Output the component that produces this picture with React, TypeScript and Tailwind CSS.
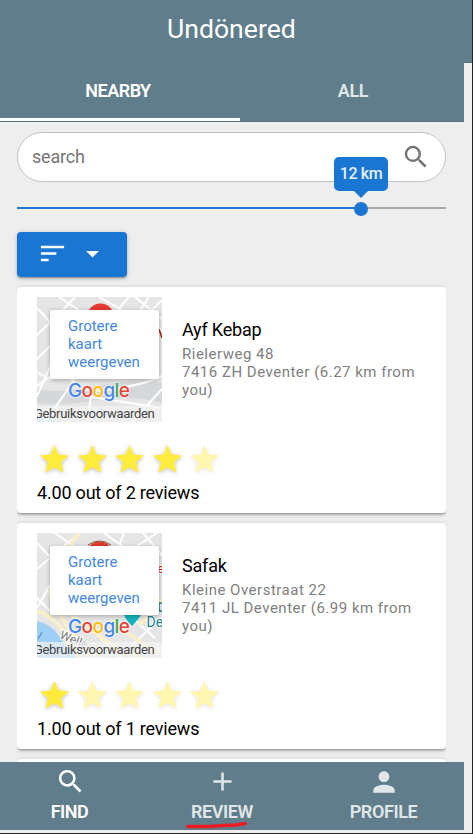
import React from "react";

const ICONS = {
  search:
    "M15.5 14h-.79l-.28-.27A6.471 6.471 0 0 0 16 9.5 6.5 6.5 0 1 0 9.5 16c1.61 0 3.09-.59 4.23-1.57l.27.28v.79l5 4.99L20.49 19l-4.99-5zm-6 0C7.01 14 5 11.99 5 9.5S7.01 5 9.5 5 14 7.01 14 9.5 11.99 14 9.5 14z",
  add: "M19 13h-6v6h-2v-6H5v-2h6V5h2v6h6v2z",
  person:
    "M12 12c2.21 0 4-1.79 4-4s-1.79-4-4-4-4 1.79-4 4 1.79 4 4 4zm0 2c-2.67 0-8 1.34-8 4v2h16v-2c0-2.66-5.33-4-8-4z",
  sort: "M3 18h6v-2H3v2zM3 6v2h18V6H3zm0 7h12v-2H3v2z",
  down: "M7 10l5 5 5-5z",
  star: "M12 17.27L18.18 21l-1.64-7.03L22 9.24l-7.19-.61L12 2 9.19 8.63 2 9.24l5.46 4.73L5.82 21z",
};

function Icon({ name, className }: { name: keyof typeof ICONS; className?: string }) {
  return (
    <svg viewBox="0 0 24 24" fill="currentColor" className={className}>
      <path d={ICONS[name]} />
    </svg>
  );
}

function AyfMap() {
  return (
    <svg viewBox="0 0 125 125" className="block size-[125px]">
      <rect width="125" height="125" fill="#e5e5e5" />
      <path d="M0 92C45 101 75 77 125 86V106C75 91 43 113 0 106Z" fill="#d5d8db" />
      <path d="M0 119Q12 116 20 125H0Z" fill="#b9dcf5" />
      <g stroke="#fff" fill="none" strokeWidth="2">
        <path d="M0 11L25 38L0 62M0 38L22 17L38 0M22 0L52 20M0 75L14 83M62 0L90 16M92 0L78 16M98 0L125 22M112 0L104 12L125 34M114 14L125 3" />
        <path d="M0 99L15 66M8 125L38 82M50 125L54 100L125 111M95 125L125 92" />
        <path d="M0 89Q26 68 35 83T78 92T125 79" />
      </g>
      <circle cx="63.5" cy="20" r="13.5" fill="#e53a30" />
      <path d="M122 32L125 41" stroke="#b3261e" strokeWidth="1.6" />
    </svg>
  );
}

function SafakMap() {
  return (
    <svg viewBox="0 0 125 125" className="block size-[125px]">
      <rect width="125" height="125" fill="#e5e5e5" />
      <path d="M0 88Q14 91 22 103T45 125H0Z" fill="#9ed0f5" />
      <g stroke="#fff" fill="none" strokeWidth="2">
        <path d="M0 10L20 31L12 60M0 36L39 3M18 0L52 24M0 75L16 47M67 0L95 20M87 0L80 18M94 17L120 0M106 0L125 22M112 14L125 40M0 65L15 80L30 76M90 80L118 105M80 125L125 85M60 102L87 125" />
      </g>
      <g stroke="#faf0c8" fill="none" strokeWidth="4">
        <path d="M42 0Q18 30 14 65M0 78Q20 84 32 108T50 125M13 55Q25 98 60 125M34 82L82 117L105 125M74 88L117 119L125 116M112 55L125 70M119 75L102 92" />
      </g>
      <circle cx="62.5" cy="22" r="13.5" fill="#e53a30" />
      <path d="M51 12Q62 4 74 12" stroke="#86542a" fill="none" />
      <path d="M87 82H104Q101 87 95 93Q89 87 87 82Z" fill="#12b5bd" />
      <path d="M125 70H122V78H125" stroke="#17828a" strokeWidth="1.5" fill="none" />
      <g fontFamily="Roboto, sans-serif" stroke="#fff" strokeWidth="2" paintOrder="stroke">
        <text x="120.5" y="40" fontSize="12" fill="#c5221f">e</text>
        <text x="109.5" y="94" fontSize="14" fill="#17828a">De</text>
        <text x="22" y="105" fontSize="12" fill="#777" transform="rotate(22 22 105)">Welle</text>
      </g>
      <path d="M1 106L5 99" stroke="#4c91ca" strokeWidth="1.2" />
    </svg>
  );
}

function MapPreview({ kind }: { kind: "ayf" | "safak" }) {
  return (
    <div className="relative size-[125px] shrink-0 overflow-hidden">
      {kind === "ayf" ? <AyfMap /> : <SafakMap />}
      <div className="absolute top-[13px] left-[13px] h-[69px] w-[109px] rounded-[2px] bg-white pt-[7px] pl-[18px] text-[15px] leading-[18px] text-[#4387df] shadow-[0_1px_4px_rgba(0,0,0,0.3)]">
        Grotere<br />kaart<br />weergeven
      </div>
      <div className="absolute bottom-0 left-0 h-4 w-full bg-[#f5f5f5]/70" />
      <div className="absolute right-[7.5px] bottom-0 text-[13px] leading-[17px] tracking-[-0.3px] whitespace-nowrap text-[#444]">Gebruiksvoorwaarden</div>
      <div className="absolute top-[81px] left-[31px] font-['Inter',sans-serif] text-[19px] leading-[26px] font-medium tracking-[-0.6px] [text-shadow:0_0_2px_white,0_0_2px_white]">
        <span className="text-[#4285f4]">G</span>
        <span className="text-[#ea4335]">o</span>
        <span className="text-[#fbbc05]">o</span>
        <span className="text-[#4285f4]">g</span>
        <span className="text-[#34a853]">l</span>
        <span className="text-[#ea4335]">e</span>
      </div>
    </div>
  );
}

type Place = { kind: "ayf" | "safak"; name: string; street: string; city: string; stars: number; summary: string };

const PLACES: Place[] = [
  { kind: "ayf", name: "Ayf Kebap", street: "Rielerweg 48", city: "7416 ZH Deventer (6.27 km from you)", stars: 4, summary: "4.00 out of 2 reviews" },
  { kind: "safak", name: "Safak", street: "Kleine Overstraat 22", city: "7411 JL Deventer (6.99 km from you)", stars: 1, summary: "1.00 out of 1 reviews" },
];

const CARD = "shrink-0 rounded bg-white shadow-[0_1px_5px_rgba(0,0,0,0.2),0_2px_2px_rgba(0,0,0,0.14),0_3px_1px_-2px_rgba(0,0,0,0.12)]";

function PlaceCard({ place }: { place: Place }) {
  return (
    <article className={CARD + " h-[226px] px-5 pt-[10px]"}>
      <div className="flex gap-5">
        <MapPreview kind={place.kind} />
        <div className="pt-[22px]">
          <h2 className="text-[18px] leading-[22px] tracking-[-0.2px] text-black">{place.name}</h2>
          <p className="mt-[4px] w-[245px] text-[15px] leading-[18px] tracking-[0.5px] text-[#808080]">
            {place.street}<br />{place.city}
          </p>
        </div>
      </div>
      <div className="mt-[20px] flex gap-[2.5px]">
        {[0, 1, 2, 3, 4].map((i) => (
          <Icon
            key={i}
            name="star"
            className={"size-[35px] text-[#ffeb3b] drop-shadow-[0_1px_2px_rgba(0,0,0,0.25)] " + (i < place.stars ? "" : "opacity-40")}
          />
        ))}
      </div>
      <p className="mt-[4px] text-[18px] leading-[24px] tracking-[-0.2px] text-black">{place.summary}</p>
    </article>
  );
}

export default function App() {
  return (
    <div className="flex h-[834px] w-[473px] flex-col overflow-hidden border-r border-b border-[#222] bg-[#eee] font-['Roboto',sans-serif]">
      <header className="h-[63px] shrink-0 border-b border-[#546e7a] bg-[#607d8b] pt-[11px] pl-[167px] text-[26.6px] leading-[36px] text-white">
        Undönered
      </header>
      <div className="-mt-px flex h-[60px] w-[464px] shrink-0 border-b border-[#546e7a] bg-[#607d8b] pt-px text-[18px] font-semibold text-white">
        <div className="flex w-[240px] items-center justify-center border-b-[3px] border-white pr-[4px] tracking-[-0.5px]">NEARBY</div>
        <div className="flex flex-1 items-center justify-center pb-[3px] pl-[2px] tracking-[-0.3px] text-[#e1e7e9]">ALL</div>
      </div>
      <main className="ml-[17px] flex h-[640px] w-[429px] shrink-0 flex-col">
        <div className="mt-[10px] flex h-[50px] shrink-0 items-center justify-between rounded-full border border-[#c2c2c2] bg-white pr-[14px] pl-[14px]">
          <span className="pb-[2px] text-[18px] tracking-[-0.2px] text-[#757575]">search</span>
          <Icon name="search" className="size-[30px] text-[#757575]" />
        </div>
        <div className="relative mt-[25px] h-[2px] shrink-0 bg-[#aaa]">
          <div className="h-full w-[344px] bg-[#1976d2]" />
          <div className="absolute top-[-5px] left-[336.5px] size-[14px] rounded-full bg-[#1976d2]" />
          <div className="absolute top-[-50px] left-[317px] flex h-[34px] w-[54px] items-center justify-center rounded-[5px] bg-[#1976d2] text-[16px] font-medium tracking-[-0.4px] text-white/90">
            12 km
            <svg viewBox="0 0 14 7" className="absolute top-[34px] left-[20px] h-[7px] w-[14px] text-[#1976d2]">
              <path d="M0 0H14L7 7Z" fill="currentColor" />
            </svg>
          </div>
        </div>
        <button className="mt-[23px] flex h-[45px] w-[110px] shrink-0 items-center gap-[9px] rounded-[4px] bg-[#1976d2] pl-[19.5px] text-white shadow-[0_1px_5px_rgba(0,0,0,0.2),0_2px_2px_rgba(0,0,0,0.14),0_3px_1px_-2px_rgba(0,0,0,0.12)]">
          <Icon name="sort" className="mb-[2px] size-[31px]" />
          <Icon name="down" className="mb-[2px] size-[31px]" />
        </button>
        <div className="mt-[7px] flex min-h-0 flex-1 flex-col gap-[10px] overflow-hidden pt-[3px]">
          {PLACES.map((p) => (
            <PlaceCard key={p.name} place={p} />
          ))}
          <div className={CARD + " h-[226px]"} />
        </div>
      </main>
      <nav className="relative flex h-[68px] w-[464px] shrink-0 bg-[#607d8b] text-[18px] leading-[22px] font-semibold text-[#e1e7e9]">
        <div className="flex w-[140px] flex-col items-center pt-[4px] text-white">
          <Icon name="search" className="size-[31px]" />
          <span className="mt-[4px] pr-px tracking-[-0.5px]">FIND</span>
        </div>
        <div className="flex w-[165px] flex-col items-center pt-[4px]">
          <Icon name="add" className="size-[31px]" />
          <span className="mt-[4px] pr-px tracking-[-0.4px]">REVIEW</span>
        </div>
        <div className="flex w-[158px] flex-col items-center pt-[4px]">
          <Icon name="person" className="size-[32px]" />
          <span className="mt-[3px] pr-px tracking-[-0.4px]">PROFILE</span>
        </div>
        <svg viewBox="0 0 62 8" className="absolute top-[59px] left-[186px] h-[8px] w-[62px]">
          <path d="M2 5.5H24L38 4.5L50 4L59 2.5" stroke="#ed1c24" strokeWidth="3.6" fill="none" strokeLinecap="round" strokeLinejoin="round" />
        </svg>
      </nav>
    </div>
  );
}
